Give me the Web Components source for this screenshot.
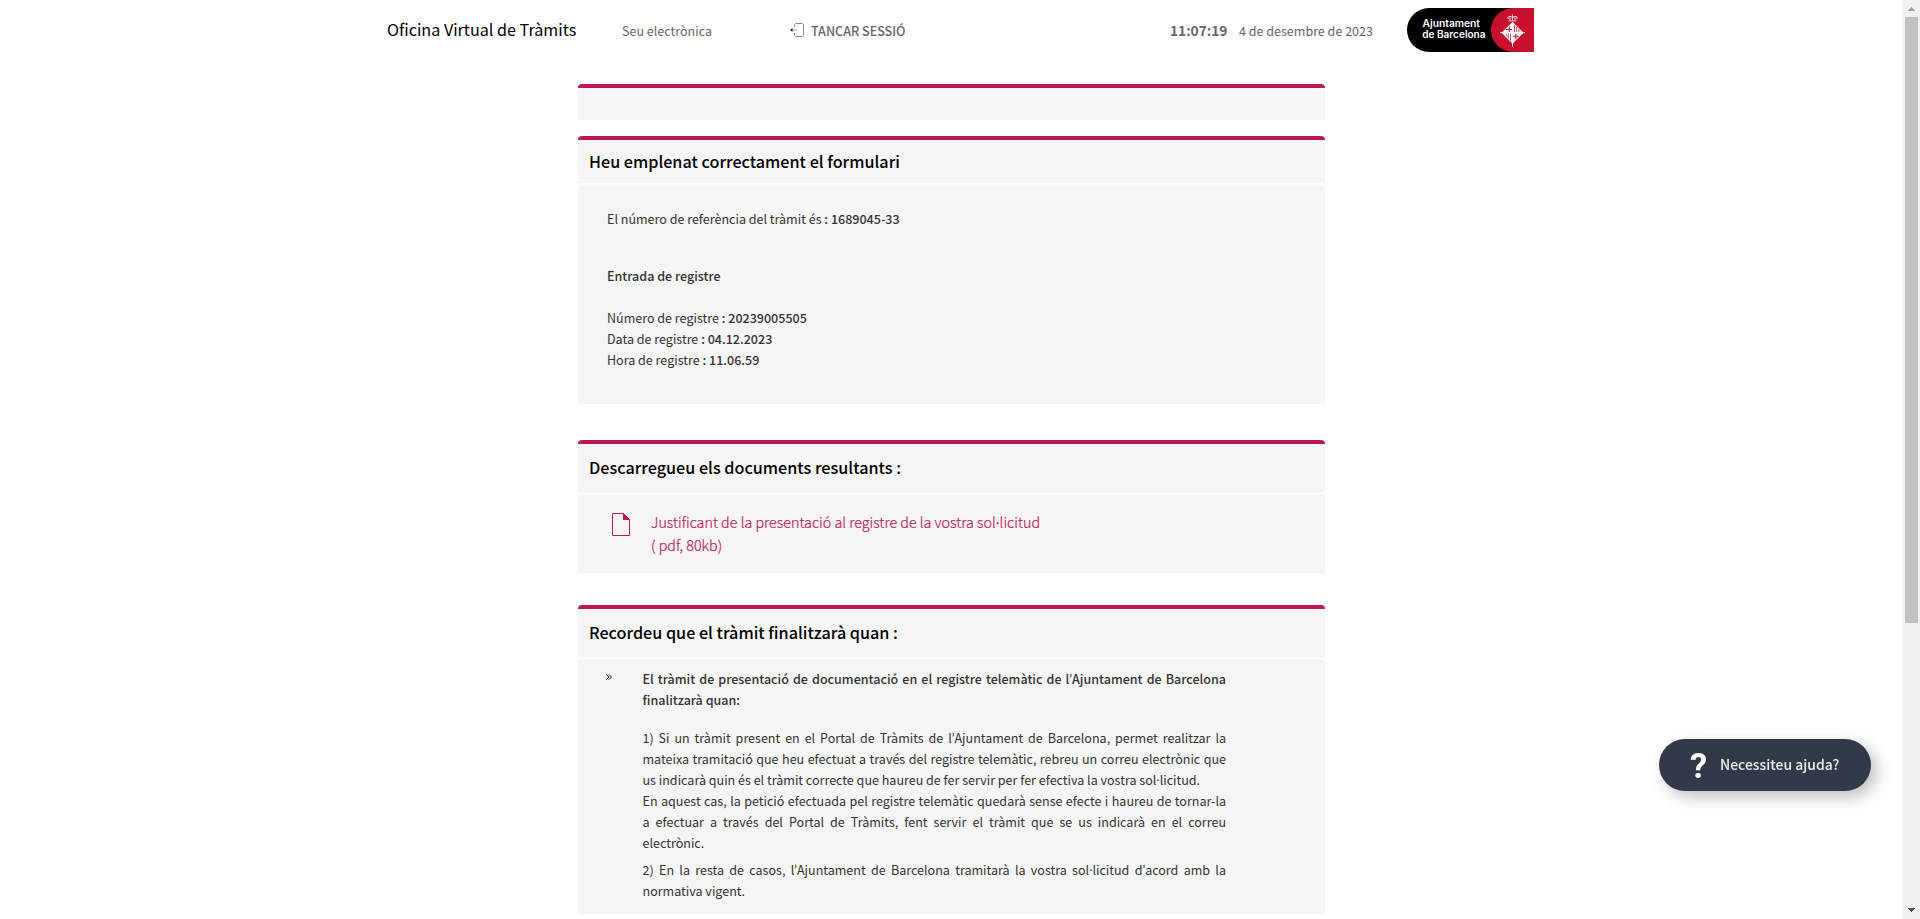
<!DOCTYPE html>
<html lang="ca">
<head>
<meta charset="utf-8">
<title>Oficina Virtual de Tràmits</title>
<style>
html,body{margin:0;height:100%;overflow:hidden;background:#fff}
body{font-family:"Noto Sans CJK SC",sans-serif;font-size:12.54px;line-height:21px;color:#333}
</style>
</head>
<body>
<tramits-app></tramits-app>
<script>
const define = (name, html) => customElements.define(name, class extends HTMLElement {
  constructor() {
    super();
    const t = document.createElement('template');
    t.innerHTML = html;
    this.attachShadow({ mode: 'open' }).append(t.content.cloneNode(true));
  }
});

define('bcn-logo', `
<style>:host{display:block;width:127px;height:44px}svg{display:block}</style>
<svg width="127" height="44" viewBox="0 0 127 44">
  <path d="M22 0H127V44H22A22 22 0 0 1 22 0Z" fill="#000"/>
  <path d="M106 0H127V44H106A22 22 0 0 1 106 0Z" fill="#c8102e"/>
  <g fill="#fff" font-family="Inter,sans-serif" font-weight="600" font-size="10">
    <text x="15.5" y="18.9" textLength="57.5" lengthAdjust="spacingAndGlyphs">Ajuntament</text>
    <text x="15.3" y="30" textLength="63.2" lengthAdjust="spacingAndGlyphs">de Barcelona</text>
  </g>
  <g fill="none" stroke="#fff">
    <path d="M101.500 12.800H109.500M101.500 11Q99.500 9 102 8.500Q104 8 105.500 9.500Q107 8 109 8.500Q111.500 9 109.500 11M105.500 6.500V12.500M103 9V12M108 9V12" stroke-width=".8"/>
    <path d="M105.500 13.700L116.500 24.700L105.500 35.700L94.500 24.700Z" fill="#fff" stroke="none"/>
    <path d="M105.500 35V38.500M93 24.700H118" stroke-width="1"/>
    <path d="M107.500 16.800V24M109.700 18.900V24M111.900 21V24M99.100 25.500V28.300M101.300 25.500V30.500M103.500 25.500V32.700" stroke="#c8102e" stroke-width=".8"/>
    <path d="M102.300 18.500V24M98.500 21.500H105M108.800 25.500V31M106 28.300H111.800" stroke="#c8102e" stroke-width="1.100"/>
  </g>
</svg>`);

define('app-header', `
<style>
:host{display:flex;height:84px;padding-left:387px;box-sizing:border-box;align-items:flex-start}
.row{display:flex;align-items:baseline;padding-top:17px;color:#666}
.title{width:235px;font-size:16.15px;line-height:24px;color:#000}
.seu{width:168px}
.out{width:380px;font-weight:500;display:flex;gap:6px;align-items:baseline}
.out svg{align-self:flex-start;margin-top:3px}
.time{width:69px;font-size:13.7px;font-weight:700}
.date{width:168px}
bcn-logo{margin-top:8px}
</style>
<div class="row">
  <span class="title">Oficina Virtual de Tràmits</span>
  <span class="seu">Seu electrònica</span>
  <span class="out"><svg width="15" height="14" viewBox="0 0 15 14" fill="none"><path d="M4.500 4V1.500L5.500 .5H12.500L13.500 1.500V12.500L12.500 13.500H5.500L4.500 12.500V10" stroke="#888"/><path d="M2 7H7" stroke="#999"/><path d="M0 7L2.500 5V9Z" fill="#223"/></svg>TANCAR SESSIÓ</span>
  <span class="time">11:07:19</span>
  <span class="date">4 de desembre de 2023</span>
</div>
<bcn-logo></bcn-logo>`);

define('info-panel', `
<style>
:host{display:block;width:747px}
header{border-top:4px solid #c1175a;border-radius:4px 4px 0 0;background:#f5f5f5;box-sizing:border-box;height:var(--head,52px);padding:var(--pad,11px) 11px 0;font-size:16.18px;line-height:24px;font-weight:500;color:#000}
.body{background:#f5f5f5;margin-top:3px}
:host([empty]) .body{display:none}
</style>
<header><slot name="title"></slot></header>
<div class="body"><slot></slot></div>`);

define('registry-data', `
<style>
:host{display:block;height:218px;box-sizing:border-box;padding:22px 29px 0}
p{margin:0}b{font-weight:500}
.sub{margin:36px 0 21px;font-weight:500}
</style>
<p>El número de referència del tràmit és <b>: 1689045-33</b></p>
<p class="sub">Entrada de registre</p>
<p>Número de registre <b>: 20239005505</b></p>
<p>Data de registre <b>: 04.12.2023</b></p>
<p>Hora de registre <b>: 11.06.59</b></p>`);

define('document-link', `
<style>
:host{display:flex;height:78px;box-sizing:border-box;padding:15px 0 0 34px;gap:21px;color:#c1175a;font-size:14.32px;font-weight:300;line-height:23px;-webkit-text-stroke:.2px #c1175a}
svg{margin-top:3px}i{font-style:normal;font-family:"Open Sans",sans-serif;line-height:0;font-weight:400}
</style>
<svg width="18" height="23" viewBox="0 0 18 23"><path d="M.5 .5H11.500L17.500 6.500V22.500H.5Z" fill="none" stroke="#c1175a"/><path d="M11 0L18 7H11Z" fill="#c1175a"/></svg>
<div>Justificant de la presentació al registre de la vostra sol<i>·</i>licitud<br>( pdf, 80kb)</div>`);

define('finish-rules', `
<style>
:host{display:flex;height:254px;box-sizing:border-box;padding:8px 0 0 28px}
svg{width:6px;margin:6px 30.500px 0 0;flex:none}
.text{width:583.500px}
p{margin:0 0 6px}.lead{font-weight:500;margin-bottom:17px}
span{display:block;white-space:nowrap}
.j{text-align:justify;text-align-last:justify;white-space:normal}
i{font-style:normal;font-family:Lato,sans-serif;line-height:0}
i.dot{font-family:"Open Sans",sans-serif}
</style>
<svg width="6" height="6" viewBox="0 0 6 6" fill="none" stroke="#112" stroke-width="1"><path d="M.5 .5L3 3L.5 5.500M3 .5L5.500 3L3 5.500"/></svg>
<div class="text">
<p class="lead"><span class="j">El tràmit de presentació de documentació en el registre telemàtic de l<i>’</i>Ajuntament de Barcelona</span><span>finalitzarà quan:</span></p>
<p><span class="j">1) Si un tràmit present en el Portal de Tràmits de l<i>’</i>Ajuntament de Barcelona, permet realitzar la</span>
<span class="j">mateixa tramitació que heu efectuat a través del registre telemàtic, rebreu un correu electrònic que</span>
<span>us indicarà quin és el tràmit correcte que haureu de fer servir per fer efectiva la vostra sol<i class="dot">·</i>licitud.</span>
<span class="j">En aquest cas, la petició efectuada pel registre telemàtic quedarà sense efecte i haureu de tornar-la</span>
<span class="j">a efectuar a través del Portal de Tràmits, fent servir el tràmit que se us indicarà en el correu</span>
<span>electrònic.</span></p>
<p><span class="j">2) En la resta de casos, l<i>’</i>Ajuntament de Barcelona tramitarà la vostra sol<i class="dot">·</i>licitud d<i>’</i>acord amb la</span>
<span>normativa vigent.</span></p>
</div>`);

define('help-button', `
<style>
:host{position:fixed;left:1659px;top:739px;width:212px;height:52px;box-sizing:border-box;padding-left:31px;border-radius:26px;background:#323949;color:#fff;display:flex;align-items:center;gap:11px;box-shadow:6px 6px 16px rgba(0,0,0,.25);font-size:13.95px;font-weight:500}
b{font:700 34.500px/52px Roboto,sans-serif;width:19px;padding-top:1px}
span{padding-bottom:1px;color:#eee}
</style>
<b>?</b><span>Necessiteu ajuda?</span>`);

define('page-scrollbar', `
<style>
:host{display:flex;flex-direction:column;width:17px;height:919px;background:#f1f1f1;align-items:center}
.thumb{width:13px;height:606px;background:#c1c1c1}
svg{display:block}.down{margin-top:auto}
</style>
<svg width="17" height="17" shape-rendering="crispEdges"><path d="M5 11L8.500 7L12 11Z" fill="#a3a3a3"/></svg>
<div class="thumb"></div>
<svg class="down" width="17" height="17" shape-rendering="crispEdges"><path d="M5 6L8.500 10L12 6Z" fill="#505050"/></svg>`);

define('tramits-app', `
<style>
:host{display:flex;height:919px;overflow:hidden}
.page{width:1903px}
main{display:flex;flex-direction:column;padding-left:578px}
.first{--head:36px;margin-bottom:16px}
.done{--head:47px;--pad:9px;margin-bottom:36px}
.docs{margin-bottom:32px}
</style>
<div class="page">
  <app-header></app-header>
  <main>
    <info-panel class="first" empty></info-panel>
    <info-panel class="done"><span slot="title">Heu emplenat correctament el formulari</span><registry-data></registry-data></info-panel>
    <info-panel class="docs"><span slot="title">Descarregueu els documents resultants :</span><document-link></document-link></info-panel>
    <info-panel><span slot="title">Recordeu que el tràmit finalitzarà quan :</span><finish-rules></finish-rules></info-panel>
  </main>
</div>
<page-scrollbar></page-scrollbar>
<help-button></help-button>`);
</script>
</body>
</html>
